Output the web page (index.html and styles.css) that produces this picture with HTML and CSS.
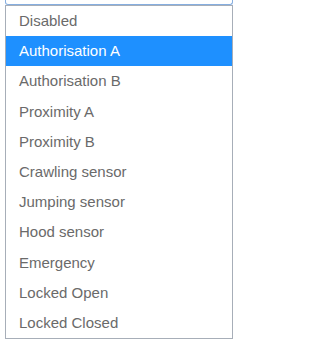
FILE: index.html
```html
<!DOCTYPE html>
<html>
<head>
<meta charset="utf-8">
<link rel="stylesheet" href="styles.css">
</head>
<body>
<div class="select-bottom"></div>
<ul class="listbox">
  <li class="option">Disabled</li>
  <li class="option selected">Authorisation A</li>
  <li class="option">Authorisation B</li>
  <li class="option">Proximity A</li>
  <li class="option">Proximity B</li>
  <li class="option">Crawling sensor</li>
  <li class="option">Jumping sensor</li>
  <li class="option">Hood sensor</li>
  <li class="option">Emergency</li>
  <li class="option">Locked Open</li>
  <li class="option">Locked Closed</li>
</ul>
</body>
</html>
```
FILE: styles.css
```css
html, body {
  margin: 0;
  padding: 0;
  background: #ffffff;
}
body {
  font-family: "Liberation Sans", Arial, sans-serif;
  width: 239px;
  height: 345px;
  overflow: hidden;
}
.select-bottom {
  margin-left: 5px;
  width: 226px;
  height: 4px;
  border: 1px solid #86aee0;
  border-top: none;
  border-radius: 0 0 3px 3px;
}
.listbox {
  list-style: none;
  margin: 0 0 0 5px;
  padding: 0;
  width: 226px;
  border: 1px solid #a7aeb8;
}
.option {
  height: 30.2px;
  line-height: 30.2px;
  padding-left: 13px;
  font-size: 15px;
  color: #6a6a6a;
  white-space: nowrap;
}
.option.selected {
  background: #1e90ff;
  color: #ffffff;
}
```
